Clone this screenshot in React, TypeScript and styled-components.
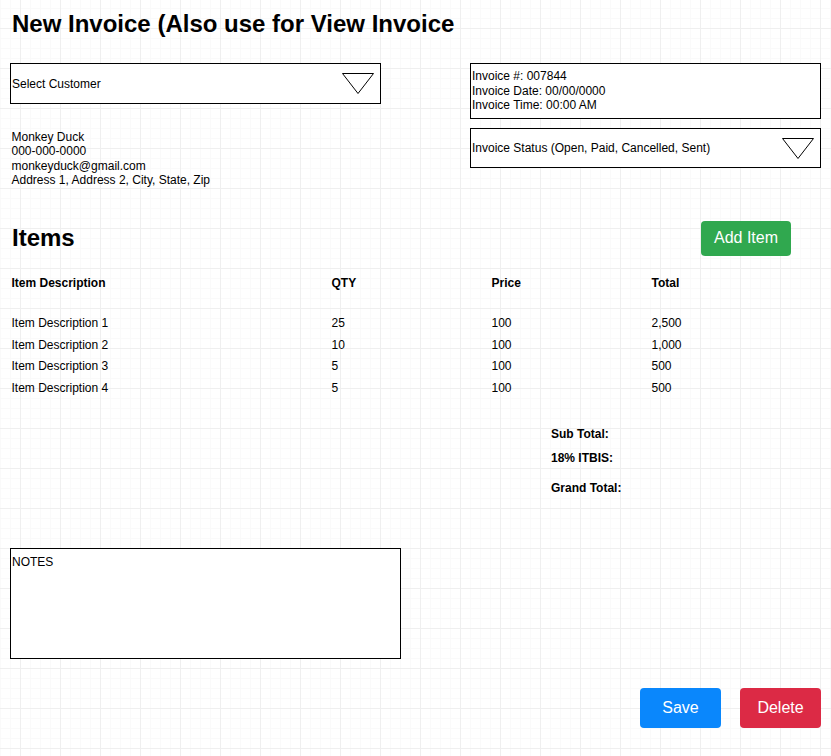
import React from "react";
import styled, { createGlobalStyle } from "styled-components";

const GlobalStyle = createGlobalStyle`
  html, body {
    margin: 0;
    padding: 0;
    min-height: 100%;
  }
  body {
    min-height: 756px;
    background-color: #ffffff;
    background-image:
      linear-gradient(to right, #efefef 1px, transparent 1px),
      linear-gradient(to bottom, #efefef 1px, transparent 1px),
      linear-gradient(to right, #fafafa 1px, transparent 1px),
      linear-gradient(to bottom, #fafafa 1px, transparent 1px);
    background-size: 40px 40px, 40px 40px, 10px 10px, 10px 10px;
    background-position: 20px 0, 0 28px, 0 0, 0 8px;
    font-family: "Liberation Sans", Arial, Helvetica, sans-serif;
    color: #000000;
  }
`;

const Page = styled.div`
  box-sizing: border-box;
  width: 831px;
  padding: 0 10px 20px 10px;
`;

const Title = styled.h1`
  margin: 10px 0 0 0;
  padding-left: 2px;
  font-size: 24px;
  line-height: 28px;
  font-weight: 700;
`;

const TopRow = styled.div`
  margin-top: 25px;
  display: flex;
  justify-content: space-between;
  align-items: flex-start;
`;

const Column = styled.div<{ $width: number }>`
  width: ${(p) => p.$width}px;
  display: flex;
  flex-direction: column;
`;

const SelectBox = styled.div<{ $height: number; $gap?: number }>`
  box-sizing: border-box;
  height: ${(p) => p.$height}px;
  margin-top: ${(p) => p.$gap ?? 0}px;
  border: 1px solid #000000;
  background: #ffffff;
  display: flex;
  align-items: center;
  justify-content: space-between;
  padding: 0 6px 0 1px;
  font-size: 12px;
  line-height: 14px;
`;

const CustomerInfo = styled.div`
  margin-top: 26px;
  padding-left: 1.5px;
  font-size: 12px;
  line-height: 1.2;
`;

const InfoBox = styled.div`
  box-sizing: border-box;
  height: 56px;
  border: 1px solid #000000;
  background: #ffffff;
  display: flex;
  flex-direction: column;
  justify-content: center;
  padding: 0 1px;
  font-size: 12px;
  line-height: 1.2;
`;

const ItemsBar = styled.div`
  margin-top: 33px;
  height: 35px;
  display: flex;
  align-items: center;
  justify-content: space-between;
  padding-right: 30px;
`;

const SectionTitle = styled.h2`
  margin: 0;
  padding-left: 2px;
  font-size: 24px;
  line-height: 28px;
  font-weight: 700;
`;

const Button = styled.button<{ $bg: string; $w: number; $h: number }>`
  box-sizing: border-box;
  width: ${(p) => p.$w}px;
  height: ${(p) => p.$h}px;
  border: none;
  border-radius: 4px;
  background: ${(p) => p.$bg};
  color: #ffffff;
  font-family: "Liberation Sans", Arial, Helvetica, sans-serif;
  font-size: 16px;
  line-height: 18px;
  padding: 0;
  cursor: pointer;
`;

const ItemsGrid = styled.div`
  margin-top: 20px;
  padding-left: 1.5px;
  display: grid;
  grid-template-columns: 320px 160px 160px 1fr;
  row-gap: 7.7px;
  font-size: 12px;
  line-height: 14px;
`;

const HeadCell = styled.div`
  font-weight: 700;
  padding-bottom: 18.6px;
`;

const Cell = styled.div`
  font-weight: 400;
`;

const Totals = styled.div`
  margin-top: 32.5px;
  margin-left: 541px;
  display: flex;
  flex-direction: column;
`;

const TotalLabel = styled.div<{ $gap: number }>`
  margin-top: ${(p) => p.$gap}px;
  font-size: 12px;
  line-height: 14px;
  font-weight: 700;
`;

const NotesBox = styled.div`
  box-sizing: border-box;
  margin-top: 53px;
  width: 391px;
  height: 111px;
  border: 1px solid #000000;
  background: #ffffff;
  padding: 6px 1px;
  font-size: 12px;
  line-height: 14px;
`;

const Actions = styled.div`
  margin-top: 29px;
  display: flex;
  justify-content: flex-end;
  gap: 19px;
`;

const Caret = () => (
  <svg width="32" height="21" viewBox="0 0 32 21" aria-hidden="true">
    <polygon
      points="0.5,0.5 31.5,0.5 16,20.5"
      fill="#ffffff"
      stroke="#000000"
      strokeWidth="1"
    />
  </svg>
);

const items = [
  { desc: "Item Description 1", qty: "25", price: "100", total: "2,500" },
  { desc: "Item Description 2", qty: "10", price: "100", total: "1,000" },
  { desc: "Item Description 3", qty: "5", price: "100", total: "500" },
  { desc: "Item Description 4", qty: "5", price: "100", total: "500" },
];

export default function App() {
  return (
    <>
      <GlobalStyle />
      <Page>
        <Title>New Invoice (Also use for View Invoice</Title>

        <TopRow>
          <Column $width={371}>
            <SelectBox $height={41}>
              <span>Select Customer</span>
              <Caret />
            </SelectBox>
            <CustomerInfo>
              <div>Monkey Duck</div>
              <div>000-000-0000</div>
              <div>monkeyduck@gmail.com</div>
              <div>Address 1, Address 2, City, State, Zip</div>
            </CustomerInfo>
          </Column>
          <Column $width={351}>
            <InfoBox>
              <div>Invoice #: 007844</div>
              <div>Invoice Date: 00/00/0000</div>
              <div>Invoice Time: 00:00 AM</div>
            </InfoBox>
            <SelectBox $height={40} $gap={9}>
              <span>Invoice Status (Open, Paid, Cancelled, Sent)</span>
              <Caret />
            </SelectBox>
          </Column>
        </TopRow>

        <ItemsBar>
          <SectionTitle>Items</SectionTitle>
          <Button $bg="#30a84f" $w={90} $h={35}>
            Add Item
          </Button>
        </ItemsBar>

        <ItemsGrid>
          <HeadCell>Item Description</HeadCell>
          <HeadCell>QTY</HeadCell>
          <HeadCell>Price</HeadCell>
          <HeadCell>Total</HeadCell>
          {items.map((it) => (
            <React.Fragment key={it.desc}>
              <Cell>{it.desc}</Cell>
              <Cell>{it.qty}</Cell>
              <Cell>{it.price}</Cell>
              <Cell>{it.total}</Cell>
            </React.Fragment>
          ))}
        </ItemsGrid>

        <Totals>
          <TotalLabel $gap={0}>Sub Total:</TotalLabel>
          <TotalLabel $gap={10}>18% ITBIS:</TotalLabel>
          <TotalLabel $gap={16}>Grand Total:</TotalLabel>
        </Totals>

        <NotesBox>NOTES</NotesBox>

        <Actions>
          <Button $bg="#0a87fc" $w={81} $h={40}>
            Save
          </Button>
          <Button $bg="#dc2a45" $w={81} $h={40}>
            Delete
          </Button>
        </Actions>
      </Page>
    </>
  );
}
